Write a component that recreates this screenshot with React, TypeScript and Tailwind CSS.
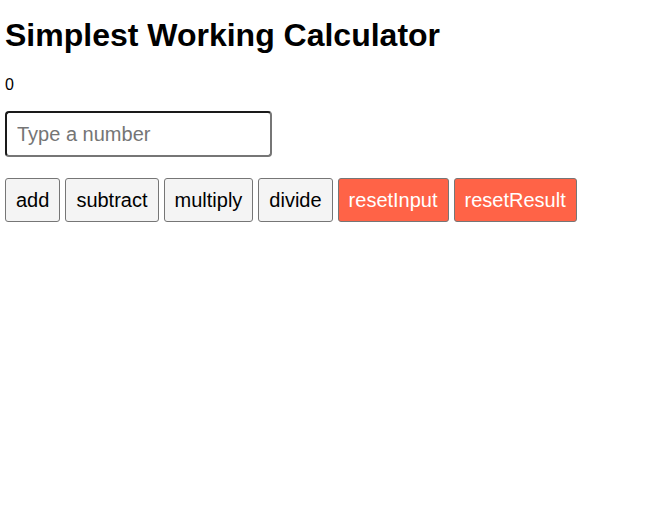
import React, { useState } from 'react';

const App: React.FC = () => {
    const [result, setResult] = useState(0);
    const [input, setInput] = useState('');

    const num = () => Number(input) || 0;

    const grayBtn = "h-[44px] px-[10px] bg-[#f4f4f4] border border-[#767676] rounded-[3px] text-[20px] text-black";
    const redBtn = "h-[44px] px-[10px] bg-[#ff6347] border border-[#767676] rounded-[3px] text-[20px] text-white";

    return (
        <div className="px-[5px] font-['Liberation_Sans',Arial,sans-serif] text-black">
            <h1 className="pt-[17px] text-[32px] font-bold leading-[36px]">Simplest Working Calculator</h1>
            <p className="mt-[23px] text-[16px] leading-[18px]">{result}</p>
            <input
                type="number"
                placeholder="Type a number"
                value={input}
                onChange={e => setInput(e.target.value)}
                className="mt-[17px] block w-[267px] h-[46px] px-[10px] border-2 border-t-[#1a1a1a] border-l-[#1a1a1a] border-r-[#767676] border-b-[#767676] rounded-[4px] text-[20px] placeholder:text-[#757575] outline-none"
            />
            <div className="mt-[21px] flex gap-[5px]">
                <button className={grayBtn} onClick={() => setResult(result + num())}>add</button>
                <button className={grayBtn} onClick={() => setResult(result - num())}>subtract</button>
                <button className={grayBtn} onClick={() => setResult(result * num())}>multiply</button>
                <button className={grayBtn} onClick={() => setResult(result / num())}>divide</button>
                <button className={redBtn} onClick={() => setInput('')}>resetInput</button>
                <button className={redBtn} onClick={() => setResult(0)}>resetResult</button>
            </div>
        </div>
    );
};

export default App;
